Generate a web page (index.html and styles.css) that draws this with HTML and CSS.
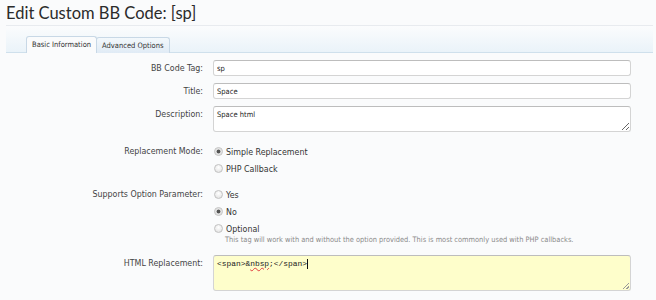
FILE: index.html
```html
<!DOCTYPE html>
<html lang="en">
<head>
    <meta charset="UTF-8">
    <meta name="viewport" content="width=device-width, initial-scale=1.0">
    <title>Edit Custom BB Code</title>
    <link rel="stylesheet" href="styles.css">
</head>
<body>

<h1 class="page-title">Edit Custom BB Code: [sp]</h1>

<div class="tabs">
    <span class="tab active">Basic Information</span>
    <span class="tab">Advanced Options</span>
</div>

<form class="edit-form">
    <div class="row">
        <label class="row-label" for="tag">BB Code Tag:</label>
        <div class="row-ctrl">
            <input class="text-input" id="tag" type="text" value="sp">
        </div>
    </div>
    <div class="row">
        <label class="row-label" for="title">Title:</label>
        <div class="row-ctrl">
            <input class="text-input" id="title" type="text" value="Space">
        </div>
    </div>
    <div class="row">
        <label class="row-label" for="desc">Description:</label>
        <div class="row-ctrl">
            <textarea class="text-area" id="desc">Space html</textarea>
        </div>
    </div>

    <div class="row row-radios">
        <div class="row-label">Replacement Mode:</div>
        <div class="row-ctrl">
            <label class="choice"><input type="radio" name="mode" checked> Simple Replacement</label>
            <label class="choice"><input type="radio" name="mode"> PHP Callback</label>
        </div>
    </div>

    <div class="row row-radios">
        <div class="row-label">Supports Option Parameter:</div>
        <div class="row-ctrl">
            <label class="choice"><input type="radio" name="opt"> Yes</label>
            <label class="choice"><input type="radio" name="opt" checked> No</label>
            <label class="choice"><input type="radio" name="opt"> Optional</label>
            <p class="hint">This tag will work with and without the option provided. This is most commonly used with PHP callbacks.</p>
        </div>
    </div>

    <div class="row row-html">
        <div class="row-label">HTML Replacement:</div>
        <div class="row-ctrl">
            <div class="code-area">&lt;span&gt;&amp;<span class="misspelt">nbsp</span>;&lt;/span&gt;<span class="caret"></span></div>
        </div>
    </div>
</form>

</body>
</html>
```

FILE: styles.css
```css
body {
    margin: 0;
    background-color: #fafbfc;
    color: #333;
    font-family: "DejaVu Sans Condensed", "DejaVu Sans", sans-serif;
    font-size: 8.8px;
    overflow: hidden;
}
.page-title {
    margin: 0;
    padding-left: 6px;
    height: 25px;
    line-height: 27px;
    font-family: Lato, "Open Sans", sans-serif;
    font-size: 16.5px;
    font-weight: normal;
    color: #2b2b2b;
}
.tabs {
    margin: 0 3px 0 6px;
    height: 26px;
    padding-left: 20px;
    display: flex;
    align-items: flex-end;
    border-top: 1px solid #e8ebef;
    border-bottom: 1px solid #cfe0ec;
    background: linear-gradient(#fbfcfd, #eaf3f9);
}
.tab {
    height: 15px;
    line-height: 15px;
    padding: 0 5px;
    margin-bottom: -1px;
    font-size: 7.5px;
    color: #333;
    border: 1px solid #c8d8e6;
    border-bottom: none;
    border-radius: 3px 3px 0 0;
    background: linear-gradient(#f3f8fc, #e0ebf5);
}
.tab.active {
    background: #fafbfc;
    height: 16px;
}
.tab + .tab {
    margin-left: -1px;
}
.edit-form {
    padding: 7px 0 0 6px;
}
.row {
    display: grid;
    grid-template-columns: 197px 418px;
    column-gap: 10px;
    margin-bottom: 7px;
}
.row-label {
    text-align: right;
    line-height: 16px;
    color: #444;
}
.text-input,
.text-area,
.code-area {
    display: block;
    box-sizing: border-box;
    width: 100%;
    margin: 0;
    padding: 0 3px;
    border: 1px solid #d4d4d4;
    border-top-color: #bdbdbd;
    border-radius: 3px;
    background: #fff;
    font-family: "DejaVu Sans Condensed", "DejaVu Sans", sans-serif;
    font-size: 7.5px;
    color: #222;
    outline: none;
}
.text-input {
    height: 16px;
}
.text-area {
    height: 26px;
    padding-top: 3px;
    resize: vertical;
}
.row-radios {
    margin-top: 11px;
    margin-bottom: 9px;
}
.row-radios + .row-radios {
    margin-top: 0;
}
.choice {
    display: flex;
    align-items: center;
    height: 17px;
    color: #333;
}
.choice input {
    -webkit-appearance: none;
    appearance: none;
    width: 9px;
    height: 9px;
    margin: 0 3px 0 1px;
    border: 1px solid #c2c2c2;
    border-radius: 50%;
    background: radial-gradient(circle at 50% 35%, #fff, #dedede);
    box-sizing: border-box;
}
.choice input:checked {
    background: radial-gradient(circle, #555 0, #555 1.6px, #d8d8d8 2.2px, #f4f4f4 4px);
}
.hint {
    margin: -2px 0 0 12px;
    font-size: 7.4px;
    line-height: 9px;
    color: #8a8a8a;
}
.row-html {
    margin-top: 11px;
}
.code-area {
    position: relative;
    height: 36px;
    padding-top: 3px;
    background: #fefecb;
    font-family: "Liberation Mono", "DejaVu Sans Mono", monospace;
    font-size: 7.9px;
    line-height: 10px;
}
.code-area::after {
    content: "";
    position: absolute;
    right: 1px;
    bottom: 1px;
    width: 7px;
    height: 7px;
    background: linear-gradient(135deg, transparent 55%, #999 55%, #999 63%, transparent 63%, transparent 78%, #999 78%, #999 86%, transparent 86%);
}
.misspelt {
    text-decoration: underline wavy #e04040;
    text-decoration-thickness: 1px;
}
.caret {
    display: inline-block;
    width: 1px;
    height: 10px;
    background: #111;
    vertical-align: top;
}
```
